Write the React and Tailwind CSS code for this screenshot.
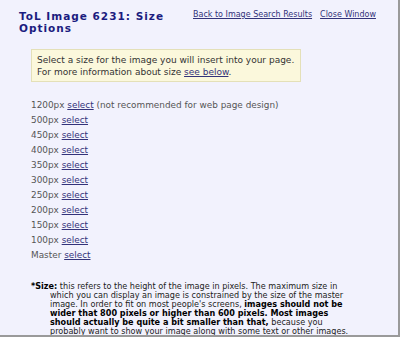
export default function App() {
  const sizes = ['500px', '450px', '400px', '350px', '300px', '250px', '200px', '150px', '100px']
  return (
    <div className="w-[400px] h-[337px] overflow-hidden bg-[#f2f2fd] border-r-2 border-b-2 border-[#9a9a9a] font-['DejaVu_Sans',sans-serif]">
      {/* header */}
      <div className="flex items-start pl-[19px] pt-[10px]">
        <h1 className="w-[174px] text-[10.5px] leading-[12px] font-bold tracking-[1px] text-[#1c1c80]">
          ToL Image 6231: Size Options
        </h1>
        <div className="flex gap-[8px] text-[8px] leading-[12px] mt-[-1px]">
          <a href="#" className="text-[#33337a] underline">Back to Image Search Results</a>
          <a href="#" className="text-[#33337a] underline">Close Window</a>
        </div>
      </div>

      {/* notice */}
      <div className="ml-[31px] mt-[15px] w-[270px] h-[33px] bg-[#fbf8dc] border border-[#e4e0b8] px-[5px] pt-[4px] whitespace-nowrap text-[9px] leading-[12px] text-[#333]">
        Select a size for the image you will insert into your page.
        <br />
        For more information about size <a href="#" className="text-[#33337a] underline">see below</a>.
      </div>

      {/* sizes */}
      <div className="ml-[31px] mt-[16px] text-[8.9px] leading-[15px] text-[#555]">
        <div>
          1200px <a href="#" className="text-[#33337a] underline">select</a> (not recommended for web page design)
        </div>
        {sizes.map(s => (
          <div key={s}>
            {s} <a href="#" className="text-[#33337a] underline">select</a>
          </div>
        ))}
        <div>
          Master <a href="#" className="text-[#33337a] underline">select</a>
        </div>
      </div>

      {/* footnote */}
      <p className="ml-[31px] mt-[19px] pl-[19px] -indent-[19px] whitespace-nowrap text-[8.1px] leading-[8.9px] text-[#222]">
        <b className="text-black">*Size:</b> this refers to the height of the image in pixels. The maximum size in
        <br />
        which you can display an image is constrained by the size of the master
        <br />
        image. In order to fit on most people's screens, <b className="text-black">images should not be</b>
        <br />
        <b className="text-black">wider that 800 pixels or higher than 600 pixels. Most images</b>
        <br />
        <b className="text-black">should actually be quite a bit smaller than that,</b> because you
        <br />
        probably want to show your image along with some text or other images.
      </p>
    </div>
  )
}
